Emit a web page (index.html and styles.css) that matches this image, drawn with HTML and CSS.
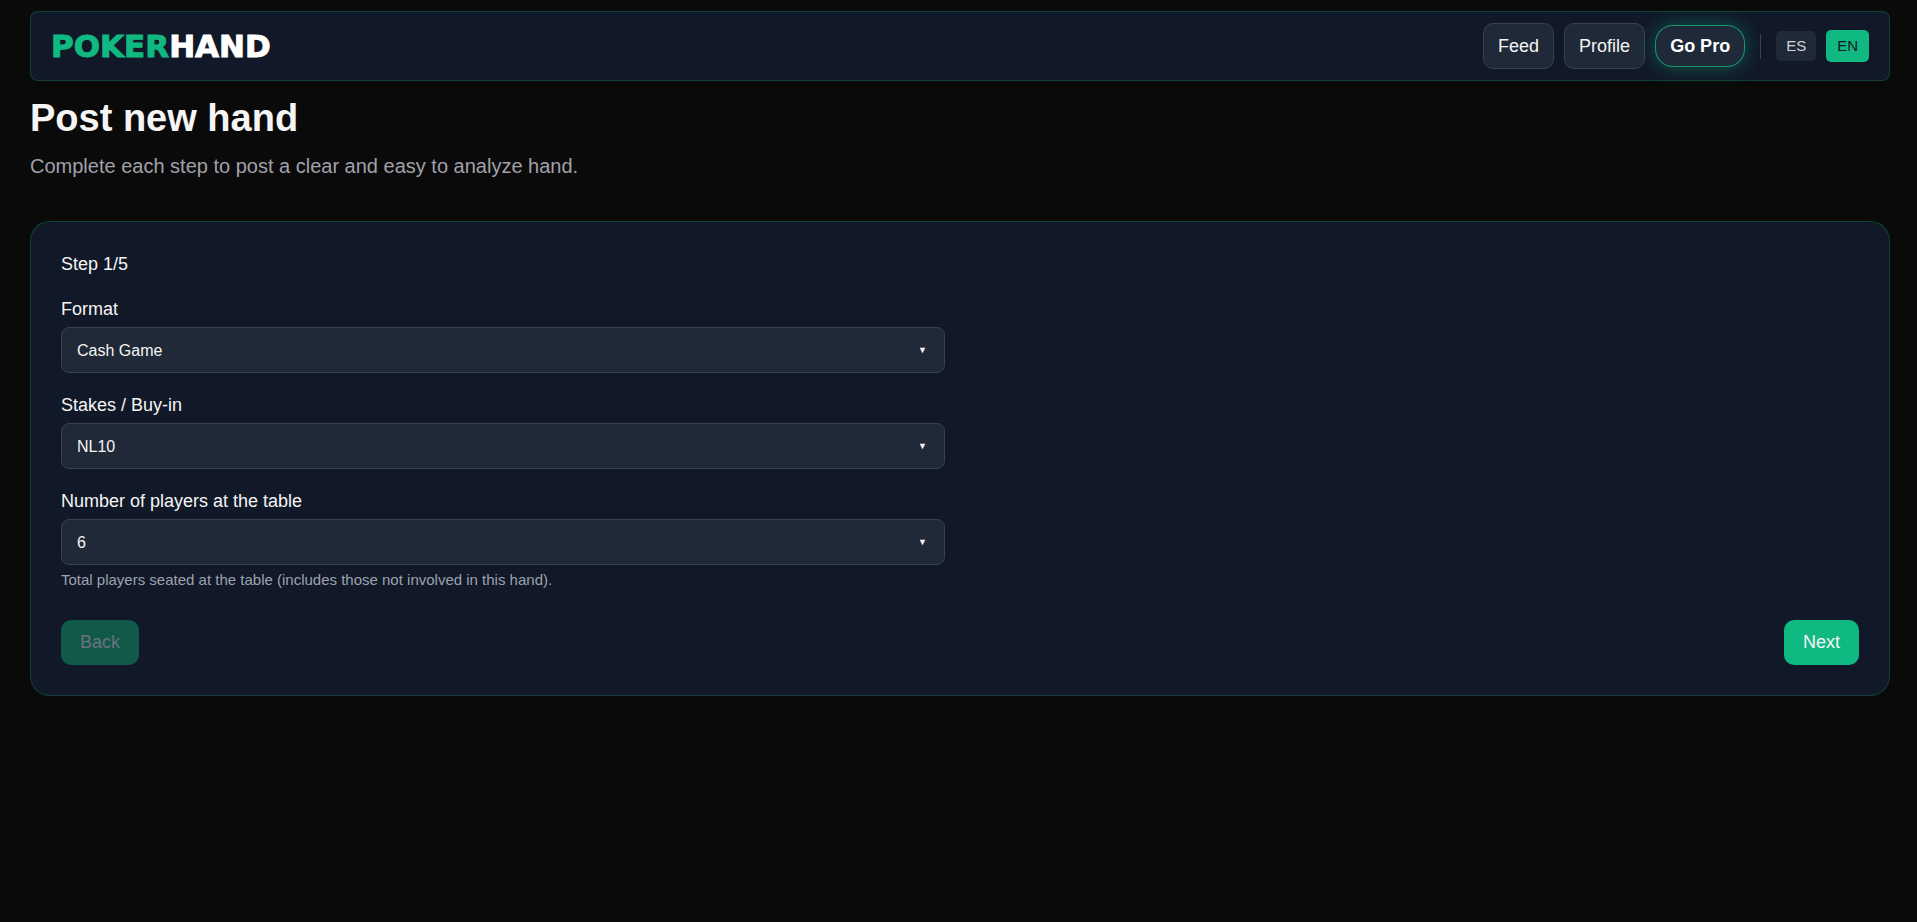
FILE: index.html
```html
<!DOCTYPE html>
<html lang="en">
<head>
<meta charset="utf-8">
<meta name="viewport" content="width=device-width, initial-scale=1">
<title>PokerHand - Post new hand</title>
<link rel="stylesheet" href="styles.css">
</head>
<body>
<header class="topbar">
  <a class="logo" href="#"><span class="logo-accent">POKER</span>HAND</a>
  <nav class="nav">
    <a class="nav-link" href="#">Feed</a>
    <a class="nav-link" href="#">Profile</a>
    <a class="nav-pro" href="#">Go Pro</a>
    <div class="lang">
      <button class="lang-btn" type="button">ES</button>
      <button class="lang-btn lang-active" type="button">EN</button>
    </div>
  </nav>
</header>
<main>
  <h1 class="title">Post new hand</h1>
  <p class="subtitle">Complete each step to post a clear and easy to analyze hand.</p>
  <form class="card">
    <p class="step">Step 1/5</p>
    <div class="columns">
      <div class="fields">
        <div class="field">
          <label for="format">Format</label>
          <div class="select-wrap"><select id="format"><option>Cash Game</option></select></div>
        </div>
        <div class="field">
          <label for="stakes">Stakes / Buy-in</label>
          <div class="select-wrap"><select id="stakes"><option>NL10</option></select></div>
        </div>
        <div class="field">
          <label for="players">Number of players at the table</label>
          <div class="select-wrap"><select id="players" aria-describedby="players-hint"><option>6</option></select></div>
          <p class="hint" id="players-hint">Total players seated at the table (includes those not involved in this hand).</p>
        </div>
      </div>
    </div>
    <div class="actions">
      <button class="btn" type="button" disabled>Back</button>
      <button class="btn" type="button">Next</button>
    </div>
  </form>
</main>
</body>
</html>
```
FILE: styles.css
```css
* {
  box-sizing: border-box;
}

body {
  margin: 0;
  padding: 11px 27px 30px 30px;
  background: #0a0a0a;
  color: #f5f5f5;
  font-family: "Liberation Sans", Arial, sans-serif;
  font-size: 18px;
}

h1,
p {
  margin: 0;
}

a {
  color: inherit;
  text-decoration: none;
}

.topbar {
  display: flex;
  align-items: center;
  justify-content: space-between;
  padding: 11px 20px;
  background: #111827;
  border: 1px solid rgba(16, 185, 129, 0.25);
  border-radius: 8px;
}

.logo {
  color: #ffffff;
  font-family: "Arial Black", "DejaVu Sans", sans-serif;
  font-size: 31px;
  font-weight: 900;
  line-height: 36px;
  -webkit-text-stroke: 1px currentColor;
}

.logo-accent {
  color: #10b981;
}

.nav {
  display: flex;
  align-items: center;
  gap: 10px;
}

.nav-link,
.nav-pro {
  padding: 0 14px;
  background: #1f2937;
  border: 1px solid #374151;
  border-radius: 10px;
  line-height: 44px;
}

.nav-pro {
  border-color: rgba(16, 185, 129, 0.75);
  border-radius: 18px;
  box-shadow: 0 0 20px rgba(16, 185, 129, 0.4);
  color: #ffffff;
  font-weight: 700;
  line-height: 40px;
}

.lang {
  display: flex;
  align-items: center;
  gap: 10px;
  margin-left: 5px;
  padding-left: 16px;
  background: linear-gradient(#374151, #374151) left center / 1px 25px no-repeat;
}

.lang-btn {
  padding: 0 10px;
  background: #1f2937;
  border: 0;
  border-radius: 5px;
  color: #d1d5db;
  font-family: inherit;
  font-size: 15px;
  line-height: 30px;
}

.lang-active {
  padding: 0 11px;
  background: #10b981;
  color: #111827;
  line-height: 32px;
}

.title {
  margin-top: 14px;
  font-size: 38px;
  line-height: 46px;
}

.subtitle {
  margin: 10px 0 40px;
  color: #a1a1aa;
  font-size: 20px;
  line-height: 30px;
}

.card {
  padding: 30px;
  background: #111827;
  border: 1px solid rgba(16, 185, 129, 0.25);
  border-radius: 20px;
}

.step {
  margin-bottom: 20px;
  line-height: 25px;
}

.columns {
  display: grid;
  grid-template-columns: 1fr 1fr;
  gap: 30px;
}

.fields {
  display: grid;
  gap: 20px;
}

.field label {
  display: block;
  margin-bottom: 5px;
  line-height: 25px;
}

.select-wrap {
  position: relative;
}

.select-wrap::after {
  content: "▼";
  position: absolute;
  top: 50%;
  right: 18px;
  font-size: 9px;
  line-height: 10px;
  transform: translateY(-50%);
  pointer-events: none;
}

select {
  display: block;
  width: 100%;
  height: 46px;
  padding: 0 15px;
  appearance: none;
  background: #1f2937;
  border: 1px solid #374151;
  border-radius: 8px;
  color: #f5f5f5;
  font-family: inherit;
  font-size: 16px;
}

.hint {
  margin-top: 5px;
  color: #9ca3af;
  font-size: 15px;
  line-height: 20px;
}

.actions {
  display: flex;
  justify-content: space-between;
  margin-top: 30px;
}

.btn {
  padding: 0 19px;
  background: #10b981;
  border: 0;
  border-radius: 10px;
  color: #f5f5f5;
  font-family: inherit;
  font-size: 18px;
  line-height: 45px;
}

.btn:disabled {
  background: #115948;
  color: #6b7280;
}
```
